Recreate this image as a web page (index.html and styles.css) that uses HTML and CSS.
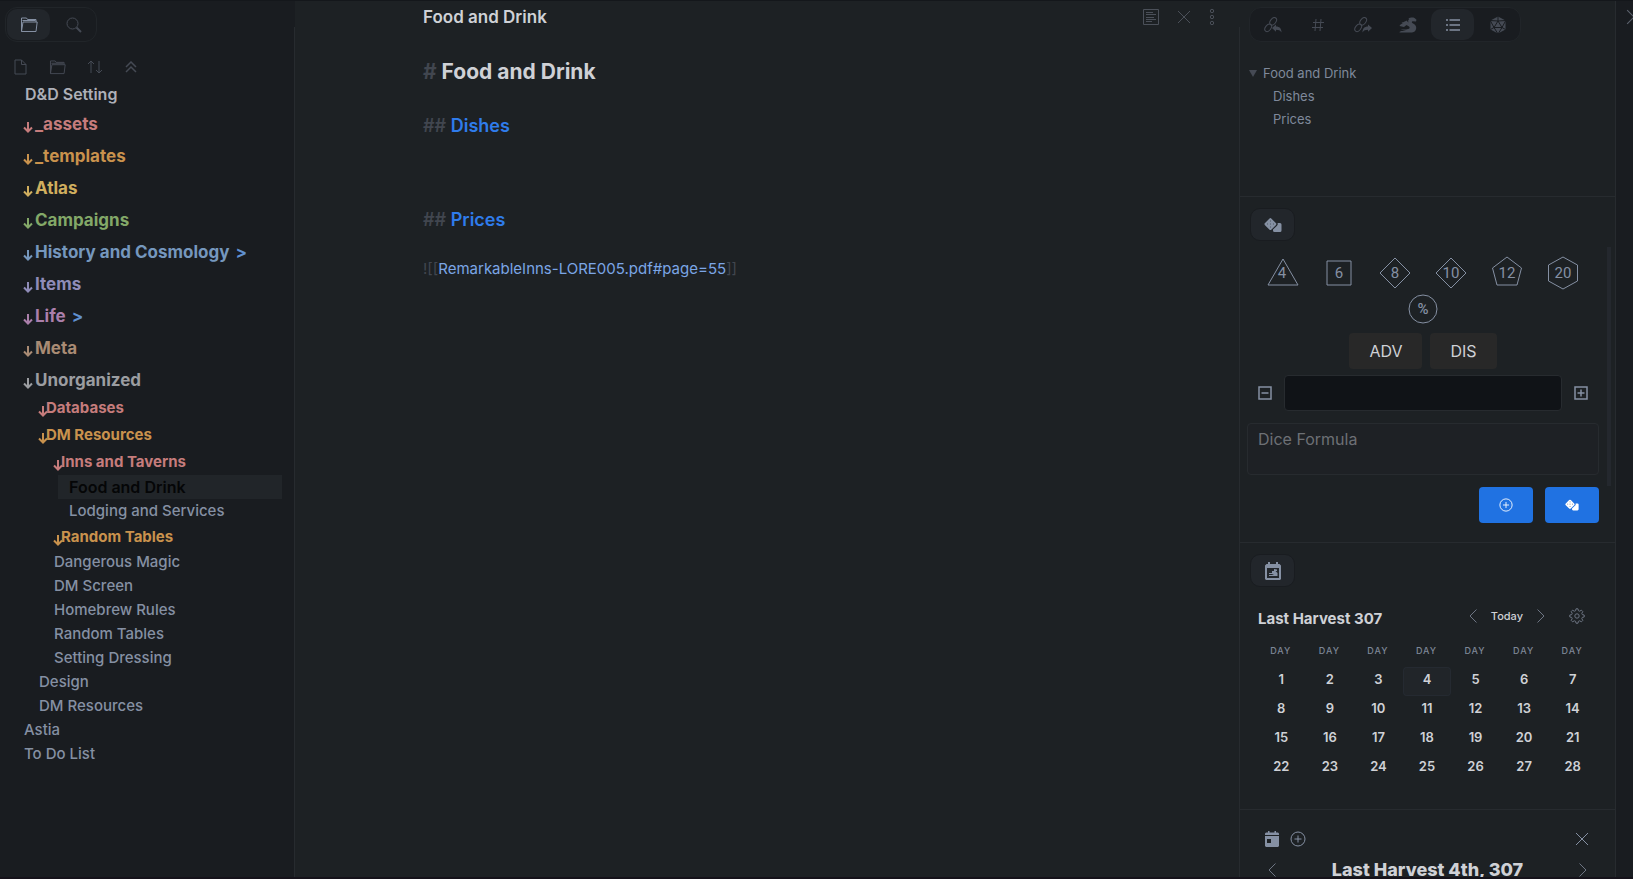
FILE: index.html
```html
<!DOCTYPE html>
<html lang="en">
<head>
    <meta charset="UTF-8">
    <meta name="viewport" content="width=device-width, initial-scale=1">
    <title>Food and Drink - D&amp;D Setting</title>
    <link rel="stylesheet" href="styles.css">
</head>
<body>

    <!-- shared shapes -->
    <svg class="defs" aria-hidden="true">
        <symbol id="i-folder" viewBox="0 0 18 16">
            <path d="M1.5 14.5V1h5l1 1.5h8.5V5M1.5 14.5 3 5h14.2L16 14.5zM2.500 3.500h13" />
        </symbol>
        <symbol id="i-arrow" viewBox="0 0 10 12">
            <path d="M5 1v9.500M1 6.500l4 4 4-4" />
        </symbol>
        <symbol id="i-x" viewBox="0 0 14 14">
            <path d="M1 1l12 12M13 1 1 13" />
        </symbol>
        <symbol id="i-left" viewBox="0 0 8 14">
            <path d="M7.500.5 1 7l6.500 6.500" />
        </symbol>
        <symbol id="i-right" viewBox="0 0 8 14">
            <path d="M.5.5 7 7 .5 13.500" />
        </symbol>
        <symbol id="i-plus" viewBox="0 0 16 16">
            <circle cx="8" cy="8" r="7" />
            <path d="M8 4.500v7M4.500 8h7" />
        </symbol>
        <symbol id="i-dice" viewBox="0 0 18 14">
            <path class="solid" d="M5.300.7a1.500 1.500 0 0 1 2.200 0l4.300 4.300a1.500 1.500 0 0 1 0 2.200l-4.300 4.300a1.500 1.500 0 0 1-2.200 0L1 7.200A1.500 1.500 0 0 1 1 5z" />
            <path class="solid" d="M13.500 5H16a1.500 1.500 0 0 1 1.500 1.500v6A1.500 1.500 0 0 1 16 14h-5.500A1.500 1.500 0 0 1 9 12.500v-1L13 7.700c.8-.8 1-1.700.5-2.700z" />
            <path class="pips" d="M6 2.500h1v1H6zM3 5.500h1v1H3zM6 5.500h1v1H6zM9 5.500h1v1H9zM6 8.500h1v1H6z" />
        </symbol>
        <symbol id="i-chain" viewBox="0 0 18 16">
            <ellipse cx="9.200" cy="4.300" rx="4.200" ry="2.700" transform="rotate(-52 9.200 4.300)" />
            <ellipse cx="4.200" cy="10.800" rx="4.200" ry="2.700" transform="rotate(-52 4.200 10.800)" />
        </symbol>
        <symbol id="i-dragon" viewBox="0 0 18 16">
            <path class="solid" d="M9.500 1.500C11 .4 14 .2 15.500 1l2 1.700-.5 1.800-3.500-.2c-1 .5-.8 1.400.2 2 2.500 1.300 3.800 2.700 3.500 5-.2 2.300-1.700 4-4.200 4.200H.5c0-1 1-1.500 3.500-1.500h3L1.500 12.500c3 .3 6 0 8.500-.8 1-.7.7-1.700 0-2.200L7.500 8 5 10 .5 9c.8-1.500 1.800-2.300 3.200-2.500L2.500 5.500C5 5.300 6.500 4 8 3.500c.3 1 .7 1.500 1.500 2-.5-1.500-.5-2.500.7-3.200z" />
        </symbol>
    </svg>

    <div class="app">

        <!-- file explorer -->
        <aside class="sidebar">
            <div class="tabs">
                <button class="tab active" type="button" aria-label="Files"><svg class="icon" width="18" height="16"><use href="#i-folder" /></svg></button>
                <button class="tab" type="button" aria-label="Search"><svg class="icon" width="16" height="16" viewBox="0 0 16 16"><circle cx="6.500" cy="6.500" r="5.500" /><path class="thick" d="M10.500 10.500 15 15" /></svg></button>
            </div>

            <div class="file-actions">
                <button type="button" aria-label="New note"><svg class="icon" width="16" height="16" viewBox="0 0 16 16"><path d="M3 1h6.500L14 5.500V15H3zM9.500 1v4.500H14" /></svg></button>
                <button type="button" aria-label="New folder"><svg class="icon" width="17" height="15"><use href="#i-folder" /></svg></button>
                <button type="button" aria-label="Sort order"><svg class="icon" width="16" height="16" viewBox="0 0 16 16"><path d="M4 14V2M1 5l3-3 3 3M12 2v12M9 11l3 3 3-3" /></svg></button>
                <button type="button" aria-label="Collapse all"><svg class="icon" width="14" height="12" viewBox="0 0 14 12"><path class="mid" d="M2 6l5-5 5 5M2 11l5-5 5 5" /></svg></button>
            </div>

            <nav class="tree">
                <h2 class="vault">D&amp;D Setting</h2>
                <ul>
                    <li><a class="folder red" href="#"><svg class="arrow"><use href="#i-arrow" /></svg>_assets</a></li>
                    <li><a class="folder orange" href="#"><svg class="arrow"><use href="#i-arrow" /></svg>_templates</a></li>
                    <li><a class="folder yellow" href="#"><svg class="arrow"><use href="#i-arrow" /></svg>Atlas</a></li>
                    <li><a class="folder green" href="#"><svg class="arrow"><use href="#i-arrow" /></svg>Campaigns</a></li>
                    <li><a class="folder blue" href="#"><svg class="arrow"><use href="#i-arrow" /></svg>History and Cosmology <span class="more">&gt;</span></a></li>
                    <li><a class="folder purple" href="#"><svg class="arrow"><use href="#i-arrow" /></svg>Items</a></li>
                    <li><a class="folder pink" href="#"><svg class="arrow"><use href="#i-arrow" /></svg>Life <span class="more">&gt;</span></a></li>
                    <li><a class="folder brown" href="#"><svg class="arrow"><use href="#i-arrow" /></svg>Meta</a></li>
                    <li>
                        <a class="folder gray" href="#"><svg class="arrow"><use href="#i-arrow" /></svg>Unorganized</a>
                        <ul>
                            <li><a class="folder red" href="#"><svg class="arrow"><use href="#i-arrow" /></svg>Databases</a></li>
                            <li>
                                <a class="folder orange" href="#"><svg class="arrow"><use href="#i-arrow" /></svg>DM Resources</a>
                                <ul>
                                    <li>
                                        <a class="folder red" href="#"><svg class="arrow"><use href="#i-arrow" /></svg>Inns and Taverns</a>
                                        <ul>
                                            <li><a class="file current" href="#">Food and Drink</a></li>
                                            <li><a class="file" href="#">Lodging and Services</a></li>
                                        </ul>
                                    </li>
                                    <li><a class="folder orange" href="#"><svg class="arrow"><use href="#i-arrow" /></svg>Random Tables</a></li>
                                    <li><a class="file" href="#">Dangerous Magic</a></li>
                                    <li><a class="file" href="#">DM Screen</a></li>
                                    <li><a class="file" href="#">Homebrew Rules</a></li>
                                    <li><a class="file" href="#">Random Tables</a></li>
                                    <li><a class="file" href="#">Setting Dressing</a></li>
                                </ul>
                            </li>
                            <li><a class="file" href="#">Design</a></li>
                            <li><a class="file" href="#">DM Resources</a></li>
                        </ul>
                    </li>
                    <li><a class="file" href="#">Astia</a></li>
                    <li><a class="file" href="#">To Do List</a></li>
                </ul>
            </nav>
        </aside>

        <!-- note -->
        <main class="note">
            <header class="note-header">
                <div class="note-title">Food and Drink</div>
                <div class="note-actions">
                    <button type="button" aria-label="Reading view"><svg class="icon" width="16" height="16" viewBox="0 0 16 16"><path d="M.5.5h15v15H.5zM3 3.500h7M3 5.500h10M3 8.500h8M3 10.500h10M3 12.500h6" /></svg></button>
                    <button type="button" aria-label="Close"><svg class="icon" width="14" height="14"><use href="#i-x" /></svg></button>
                    <button type="button" aria-label="More options"><svg class="icon" width="6" height="18" viewBox="0 0 6 18"><circle cx="3" cy="3" r="1.700" /><circle cx="3" cy="9" r="1.700" /><circle cx="3" cy="15" r="1.700" /></svg></button>
                </div>
            </header>
            <article class="editor">
                <h1><span class="mark">#</span> Food and Drink</h1>
                <h2><span class="mark">##</span> Dishes</h2>
                <h2 class="spaced"><span class="mark">##</span> Prices</h2>
                <p><span class="mark">![[</span><a href="#">RemarkableInns-LORE005.pdf#page=55</a><span class="mark">]]</span></p>
            </article>
        </main>

        <!-- right panes -->
        <aside class="panes">
            <section class="pane outline">
                <div class="tabs">
                    <button class="tab" type="button" aria-label="Backlinks"><svg class="icon" width="18" height="16" viewBox="0 0 18 16"><use href="#i-chain" width="18" height="16" /><path class="solid" d="M8 11l4-3.500v2c3.500 0 5.500 2 5.500 6-1-2-3-2.700-5.500-2.700v2z" /></svg></button>
                    <button class="tab" type="button" aria-label="Tags"><svg class="icon" width="14" height="14" viewBox="0 0 14 14"><path d="M5 1 4 13M10 1 9 13M2 4.500h11M1 9.500h11" /></svg></button>
                    <button class="tab" type="button" aria-label="Outgoing links"><svg class="icon" width="18" height="16" viewBox="0 0 18 16"><use href="#i-chain" width="18" height="16" /><path class="solid" d="M18 11l-4-3.500v2c-3.500 0-5.500 2-5.500 6 1-2 3-2.700 5.500-2.700v2z" /></svg></button>
                    <button class="tab" type="button" aria-label="Initiative tracker"><svg class="icon" width="18" height="16"><use href="#i-dragon" /></svg></button>
                    <button class="tab active" type="button" aria-label="Outline"><svg class="icon" width="16" height="14" viewBox="0 0 16 14"><path class="mid" d="M1 2h2M1 7h2M1 12h2M4.500 2H15M4.500 7H15M4.500 12H15" /></svg></button>
                    <button class="tab" type="button" aria-label="Dice"><svg class="icon" width="18" height="18" viewBox="0 0 18 18"><path class="solid" d="M9 .5 16.500 4.500v9L9 17.500 1.500 13.500v-9z" /><path class="cut" d="M9 0v5M5 11.500 9 5l4 6.500zM1 4.500 9 5l8-.5M1.500 5 5 11.500 1.500 13.500M16.500 5 13 11.500l3.500 2M5 11.500 9 18l4-6.500" /></svg></button>
                </div>
                <ul class="headings">
                    <li class="top"><svg class="caret" width="8" height="7" viewBox="0 0 8 7"><path d="M0 0h8L4 7z" /></svg><a href="#">Food and Drink</a></li>
                    <li><a href="#">Dishes</a></li>
                    <li><a href="#">Prices</a></li>
                </ul>
            </section>

            <section class="pane roller">
                <button class="chip" type="button" aria-label="Dice tray"><svg class="icon" width="18" height="14"><use href="#i-dice" /></svg></button>
                <div class="tray">
                    <div class="dice">
                        <button type="button"><svg width="34" height="34" viewBox="0 0 34 34"><path d="M17 3 32 29H2z" /><text x="16" y="22">4</text></svg></button>
                        <button type="button"><svg width="34" height="34" viewBox="0 0 34 34"><path d="M5 5h24v24H5z" /><text x="17" y="22">6</text></svg></button>
                        <button type="button"><svg width="34" height="34" viewBox="0 0 34 34"><path d="M17 2 32 17 17 32 2 17z" /><text x="17" y="22">8</text></svg></button>
                        <button type="button"><svg width="34" height="34" viewBox="0 0 34 34"><path d="M17 2 32 17 17 32 2 17z" /><text x="17" y="22">10</text></svg></button>
                        <button type="button"><svg width="34" height="34" viewBox="0 0 34 34"><path d="M17 1 31.500 12 27 29H7L2.500 12z" /><text x="17" y="22">12</text></svg></button>
                        <button type="button"><svg width="34" height="34" viewBox="0 0 34 34"><path d="M17 1 31.500 9v16L17 33 2.500 25V9z" /><text x="17" y="22">20</text></svg></button>
                        <button type="button"><svg width="34" height="34" viewBox="0 0 34 34"><circle cx="17" cy="17" r="14" /><text class="pct" x="17" y="22">%</text></svg></button>
                    </div>
                    <div class="adv">
                        <button type="button">ADV</button>
                        <button type="button">DIS</button>
                    </div>
                    <div class="modifier">
                        <button type="button" aria-label="Decrease"><svg class="icon" width="14" height="14" viewBox="0 0 14 14"><path class="mid" d="M1 1h12v12H1zM3.500 7h7" /></svg></button>
                        <input type="text" aria-label="Modifier">
                        <button type="button" aria-label="Increase"><svg class="icon" width="14" height="14" viewBox="0 0 14 14"><path class="mid" d="M1 1h12v12H1zM3.500 7h7M7 3.500v7" /></svg></button>
                    </div>
                    <textarea placeholder="Dice Formula" aria-label="Dice Formula"></textarea>
                    <div class="roll">
                        <button type="button" aria-label="Save formula"><svg class="icon" width="14" height="14"><use href="#i-plus" /></svg></button>
                        <button type="button" aria-label="Roll"><svg class="icon" width="14" height="12"><use href="#i-dice" /></svg></button>
                    </div>
                </div>
            </section>

            <section class="pane calendar">
                <button class="chip" type="button" aria-label="Calendar"><svg class="icon" width="16" height="18" viewBox="0 0 16 18"><path class="solid" fill-rule="evenodd" d="M3 0h2v2h6V0h2v2h1.500L16 3.500V17l-1 1H1l-1-1V3.500L1.500 2H3zM2 6v10h12V6zM9 7l3 .5v1.500h-1.500l2 2V14H4v-1h5l-2-1H4v-1h3V9h2z" /></svg></button>
                <div class="month">
                    <h3>Last Harvest 307</h3>
                    <div class="month-nav">
                        <button type="button" aria-label="Previous month"><svg class="icon" width="8" height="14"><use href="#i-left" /></svg></button>
                        <button type="button">Today</button>
                        <button type="button" aria-label="Next month"><svg class="icon" width="8" height="14"><use href="#i-right" /></svg></button>
                    </div>
                    <button class="gear" type="button" aria-label="Settings"><svg class="icon" width="16" height="16" viewBox="0 0 16 16"><circle cx="8" cy="8" r="2.200" /><path d="M7 .8h2l.4 1.900 1.300.5 1.700-1 1.400 1.400-1 1.700.5 1.300 1.900.4v2l-1.900.4-.5 1.300 1 1.700-1.400 1.400-1.700-1-1.300.5-.4 1.900H7l-.4-1.900-1.300-.5-1.700 1-1.400-1.400 1-1.700-.5-1.300L.8 9V7l1.900-.4.5-1.300-1-1.700 1.400-1.400 1.700 1 1.300-.5z" /></svg></button>
                </div>
                <table>
                    <thead>
                        <tr><th>Day</th><th>Day</th><th>Day</th><th>Day</th><th>Day</th><th>Day</th><th>Day</th></tr>
                    </thead>
                    <tbody>
                        <tr><td>1</td><td>2</td><td>3</td><td class="today">4</td><td>5</td><td>6</td><td>7</td></tr>
                        <tr><td>8</td><td>9</td><td>10</td><td>11</td><td>12</td><td>13</td><td>14</td></tr>
                        <tr><td>15</td><td>16</td><td>17</td><td>18</td><td>19</td><td>20</td><td>21</td></tr>
                        <tr><td>22</td><td>23</td><td>24</td><td>25</td><td>26</td><td>27</td><td>28</td></tr>
                    </tbody>
                </table>
            </section>

            <section class="pane day">
                <div class="day-bar">
                    <button type="button" aria-label="Open note"><svg class="icon" width="14" height="16" viewBox="0 0 14 16"><path class="solid" fill-rule="evenodd" d="M3 0h1.500v1.500h5V0H11v1.500h2l1 1V4H0V2.500l1-1h2zM0 5h14v10l-1 1H1l-1-1zM2 8v4h4V8z" /></svg></button>
                    <button type="button" aria-label="New event"><svg class="icon" width="16" height="16"><use href="#i-plus" /></svg></button>
                    <button class="push" type="button" aria-label="Close day"><svg class="icon" width="14" height="14"><use href="#i-x" /></svg></button>
                </div>
                <div class="day-nav">
                    <button type="button" aria-label="Previous day"><svg class="icon" width="8" height="14"><use href="#i-left" /></svg></button>
                    <h2>Last Harvest 4th, 307</h2>
                    <button type="button" aria-label="Next day"><svg class="icon" width="8" height="14"><use href="#i-right" /></svg></button>
                </div>
            </section>
        </aside>

        <div class="ribbon">
            <button type="button" aria-label="Collapse panes"><svg class="icon" width="16" height="16"><use href="#i-x" /></svg></button>
        </div>
    </div>

</body>
</html>
```

FILE: styles.css
```css
:root {
    --bg: #1d2124;
    --bg-dark: #191c20;
    --line: #272b2f;
    --hover: #22262b;
    --text: #cfd1d6;
    --muted: #8590a3;
    --faint: #454a54;
}

* {
    box-sizing: border-box;
}

html,
body {
    height: 100%;
    margin: 0;
}

body {
    overflow: hidden;
    background: var(--bg);
    color: var(--text);
    font-family: Inter, "Liberation Sans", sans-serif;
    font-size: 16px;
}

ul {
    margin: 0;
    padding: 0;
    list-style: none;
}

h1, h2, h3, p {
    margin: 0;
}

a {
    color: inherit;
    text-decoration: none;
}

button {
    display: flex;
    align-items: center;
    justify-content: center;
    margin: 0;
    padding: 0;
    border: 0;
    background: none;
    color: inherit;
    font: inherit;
}

/* icons */
.defs {
    position: absolute;
    width: 0;
    height: 0;
}

.icon,
.arrow {
    flex: none;
    fill: none;
    stroke: currentColor;
    stroke-width: 1;
}

.thick {
    stroke-width: 2;
}

.mid {
    stroke-width: 1.5;
}

.solid {
    fill: currentColor;
    stroke: none;
}

.pips {
    fill: #4f5765;
    stroke: none;
}

.cut {
    stroke: var(--bg-dark);
}

/* layout */
.app {
    display: grid;
    grid-template-columns: 295px minmax(0, 1fr) 376px 18px;
    height: 100%;
    border-top: 1px solid #14171b;
    border-bottom: 2px solid #15121a;
}

/* tab strips */
.tabs {
    display: flex;
    gap: 2px;
    width: max-content;
    padding: 1px;
    border: 1px solid #212529;
    border-radius: 12px;
    background: var(--bg-dark);
    color: var(--faint);
}

.tab {
    width: 43px;
    height: 31px;
    border-radius: 10px;
}

.tab.active {
    background: var(--hover);
    color: var(--muted);
}

/* file explorer */
.sidebar {
    padding-top: 6px;
    /* the divider starts under the title bar */
    background: linear-gradient(var(--line), var(--line)) right 26px / 1px 100% no-repeat, var(--bg-dark);
}

.sidebar .tabs {
    margin-left: 5px;
}

.file-actions {
    display: flex;
    gap: 21px;
    margin: 17px 0 0 12px;
    height: 16px;
    color: var(--faint);
}

.tree {
    padding: 7px 13px 0 13px;
}

.vault {
    padding-left: 12px;
    color: #aeb0b8;
    font-size: 16px;
    font-weight: 600;
    line-height: 24px;
}

.tree ul ul {
    padding-left: 15px;
}

.folder {
    display: flex;
    align-items: center;
    gap: 2px;
    height: 32px;
    padding: 4px 0 0 10px;
    font-size: 17px;
    font-weight: 700;
    white-space: pre;
}

.tree ul ul .folder {
    gap: 0;
    height: 27px;
    padding-top: 0;
    font-size: 15px;
}

.arrow {
    width: 10px;
    height: 12px;
    margin-top: 6px;
    stroke-width: 2;
}

.tree ul ul .arrow {
    margin-right: -2px;
}

.red { color: #c67c7c; }
.orange { color: #c9924d; }
.yellow { color: #d0ae5e; }
.green { color: #83a868; }
.blue { color: #7597bd; }
.purple { color: #8f8cb8; }
.pink { color: #ab7fab; }
.brown { color: #a98b74; }
.gray { color: #9b9da1; }
.more { color: #6090cf; }

.file {
    display: block;
    padding-left: 11px;
    color: var(--muted);
    font-size: 15px;
    font-weight: 500;
    line-height: 24px;
}

.file.current {
    background: #212529;
    color: #050607;
    font-size: 16px;
    font-weight: 600;
}

/* note */
.note-header,
.editor {
    display: grid;
    grid-template-columns: 1fr minmax(0, 688px) 1fr;
}

.note-header {
    align-items: center;
    height: 32px;
}

.note-title {
    grid-column: 2;
    font-size: 17px;
    font-weight: 600;
}

.note-actions {
    display: flex;
    gap: 18px;
    align-items: center;
    justify-content: flex-end;
    padding-right: 24px;
    color: #4b5059;
}

.editor {
    padding-top: 21px;
}

.editor > * {
    grid-column: 2;
}

.editor h1 {
    font-size: 21px;
    font-weight: 700;
    line-height: 36px;
}

.editor h2 {
    margin-top: 19px;
    color: #2f7ceb;
    font-size: 18px;
    font-weight: 600;
    line-height: 34px;
}

.editor .spaced {
    margin-top: 60px;
}

.editor p {
    margin-top: 19px;
    color: #7ba6e6;
    font-size: 15px;
    line-height: 26px;
}

.editor .mark {
    color: #41464f;
}

/* right panes */
.panes {
    display: flex;
    flex-direction: column;
    overflow: hidden;
    background: linear-gradient(var(--line), var(--line)) left 26px / 1px 100% no-repeat;
}

.pane {
    flex: none;
    padding: 11px 16px 0 11px;
    border-top: 1px solid var(--line);
}

.chip {
    width: 45px;
    height: 33px;
    border: 1px solid #191c20;
    border-radius: 10px;
    background: var(--hover);
    color: var(--muted);
}

.outline {
    height: 195px;
    padding: 6px 10px 0;
    border-top: 0;
}

.headings {
    margin-top: 20px;
    color: #7f899b;
    font-size: 13px;
    line-height: 23px;
}

.headings li {
    padding-left: 24px;
}

.headings .top {
    display: flex;
    gap: 6px;
    align-items: center;
    padding-left: 0;
}

.caret {
    fill: var(--faint);
}

/* dice roller */
.roller {
    height: 346px;
    padding-right: 4px;
    padding-left: 8px;
}

.roller .chip {
    margin-left: 3px;
}

.roll .pips {
    fill: #9dbcf0;
}

.tray {
    height: 239px;
    margin-top: 6px;
    padding: 9px 8px 0 0;
    border-right: 4px solid #24282e;
}

.dice {
    display: flex;
    flex-wrap: wrap;
    gap: 2px 22px;
    justify-content: center;
}

.dice button {
    width: 34px;
    height: 34px;
}

.dice svg {
    fill: none;
    stroke: var(--muted);
}

.dice text {
    fill: var(--muted);
    stroke: none;
    font-family: Roboto, sans-serif;
    font-size: 15px;
    text-anchor: middle;
}

.dice .pct {
    font-size: 15px;
    font-weight: 500;
}

.adv {
    display: flex;
    gap: 8px;
    justify-content: center;
    margin-top: 7px;
}

.adv button {
    height: 36px;
    padding: 0 20px;
    border-radius: 4px;
    background: #282828;
}

.modifier {
    display: flex;
    gap: 12px;
    align-items: center;
    margin-top: 6px;
    padding: 0 11px;
    color: var(--muted);
}

.modifier input {
    flex: 1;
    min-width: 0;
    height: 36px;
    border: 1px solid var(--line);
    border-radius: 4px;
    background: #101317;
    color: var(--text);
}

.tray textarea {
    display: block;
    width: 100%;
    height: 52px;
    margin-top: 12px;
    padding: 5px 10px;
    border: 1px solid var(--line);
    border-radius: 4px;
    background: #1e2125;
    color: var(--text);
    font: inherit;
    resize: none;
}

.tray textarea::placeholder {
    color: #6d7075;
}

.roll {
    display: flex;
    gap: 12px;
    justify-content: flex-end;
    margin-top: 12px;
}

.roll button {
    width: 54px;
    height: 36px;
    border-radius: 4px;
    background: #2072e2;
    color: #fff;
}

/* calendar */
.calendar {
    height: 267px;
}

.month {
    display: flex;
    align-items: center;
    margin: 16px 0 0 8px;
    padding-right: 14px;
    height: 26px;
}

.month h3 {
    flex: 1;
    padding-top: 4px;
    font-size: 15px;
    font-weight: 700;
}

.month-nav {
    display: flex;
    gap: 14px;
    font-size: 11px;
    font-weight: 500;
}

.month-nav svg,
.gear,
.day-nav svg {
    color: #6d7583;
}

.gear {
    margin-left: 24px;
}

.calendar table {
    width: 340px;
    margin: 11px 0 0 7px;
    border-collapse: collapse;
    table-layout: fixed;
    text-align: center;
}

.calendar th {
    height: 20px;
    padding: 0 1px 0 0;
    color: #7d8797;
    font-size: 9px;
    font-weight: 500;
    letter-spacing: 1px;
    text-transform: uppercase;
}

.calendar tbody::before {
    content: "";
    display: block;
    height: 7px;
}

.calendar td {
    height: 29px;
    padding: 0 0 6px;
    font-size: 13px;
    font-weight: 600;
}

.calendar .today {
    background: #212529;
    border-radius: 4px;
    box-shadow: inset 0 0 0 1px #252a31;
}

/* day view */
.day {
    padding: 21px 26px 0 26px;
}

.day-bar {
    display: flex;
    gap: 11px;
    align-items: center;
    color: var(--muted);
}

.push {
    margin-left: auto;
}

.day-nav {
    display: flex;
    align-items: center;
    justify-content: space-between;
    padding: 8px 2px 0 3px;
}

.day-nav h2 {
    font-size: 18px;
    font-weight: 800;
    line-height: 29px;
}

/* right edge */
.ribbon {
    overflow: hidden;
    padding: 8px 0 0 10px;
    border-left: 1px solid var(--line);
    background: var(--bg-dark);
    color: #5b616c;
}
```
